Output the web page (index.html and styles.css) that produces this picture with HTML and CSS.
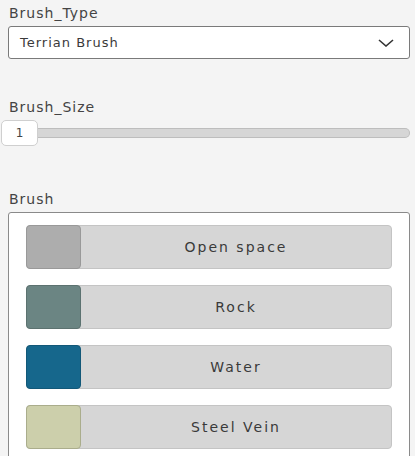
FILE: index.html
```html
<!DOCTYPE html>
<html>
<head>
<meta charset="utf-8">
<link rel="stylesheet" href="styles.css">
</head>
<body>
<div class="page">
  <div class="field">
    <div class="label">Brush_Type</div>
    <div class="select">
      <span class="select-text">Terrian Brush</span>
      <svg class="chevron" width="16" height="8" viewBox="0 0 16 8"><path d="M1 1 L8 7 L15 1" fill="none" stroke="#333" stroke-width="1.6"/></svg>
    </div>
  </div>
  <div class="field size">
    <div class="label">Brush_Size</div>
    <div class="slider">
      <div class="thumb">1</div>
      <div class="track"></div>
    </div>
  </div>
  <div class="field brush">
    <div class="label">Brush</div>
    <div class="panel">
      <div class="item"><div class="swatch" style="background:#adadad;border-color:#999"></div><div class="name">Open space</div></div>
      <div class="item"><div class="swatch" style="background:#6b8583;border-color:#5c7270"></div><div class="name">Rock</div></div>
      <div class="item"><div class="swatch" style="background:#16678c;border-color:#125878"></div><div class="name">Water</div></div>
      <div class="item"><div class="swatch" style="background:#cccfab;border-color:#aaad8c"></div><div class="name">Steel Vein</div></div>
    </div>
  </div>
</div>
</body>
</html>
```
FILE: styles.css
```css
html, body { margin: 0; padding: 0; }
body {
  background: #f4f4f4;
  font-family: "DejaVu Sans", sans-serif;
  color: #333;
  width: 415px;
  height: 456px;
  overflow: hidden;
}
.page { padding: 3px 5px 0 8px; }
.label {
  font-size: 14px;
  letter-spacing: 1px;
  color: #444;
  height: 21px;
  line-height: 21px;
  padding-left: 1px;
}
.select {
  margin-top: 2px;
  height: 31px;
  border: 1px solid #7a7a7a;
  border-radius: 3px;
  background: #fff;
  display: flex;
  align-items: center;
  justify-content: space-between;
  padding: 0 15px 0 11px;
  box-sizing: content-box;
}
.select-text { font-size: 13px; letter-spacing: 1px; color: #3a3a3a; }
.chevron { display: block; }
.size { margin-top: 38px; }
.slider {
  margin-left: -7px;
  margin-top: 2px;
  display: flex;
  align-items: center;
  height: 26px;
}
.thumb {
  width: 35px;
  height: 24px;
  border: 1px solid #cfcfcf;
  border-radius: 5px;
  background: #fff;
  display: flex;
  align-items: center;
  justify-content: center;
  font-size: 12px;
  color: #444;
  position: relative;
  z-index: 1;
}
.track {
  flex: 1;
  height: 8px;
  margin-left: -1px;
  background: #d6d6d6;
  border: 1px solid #bdbdbd;
  border-left: none;
  border-radius: 0 5px 5px 0;
}
.brush { margin-top: 43px; }
.panel {
  margin-top: 2px;
  border: 1px solid #8a8a8a;
  border-radius: 3px;
  background: #fff;
  padding: 12px 17px 20px 17px;
  display: flex;
  flex-direction: column;
  gap: 16px;
}
.item {
  height: 42px;
  display: flex;
  border: 1px solid #c4c4c4;
  border-radius: 4px;
  background: #d6d6d6;
}
.swatch {
  width: 53px;
  margin: -1px 0 -1px -1px;
  border: 1px solid;
  border-radius: 4px;
}
.name {
  flex: 1;
  display: flex;
  align-items: center;
  justify-content: center;
  font-size: 14px;
  letter-spacing: 2px;
  color: #3a3a3a;
}
```
